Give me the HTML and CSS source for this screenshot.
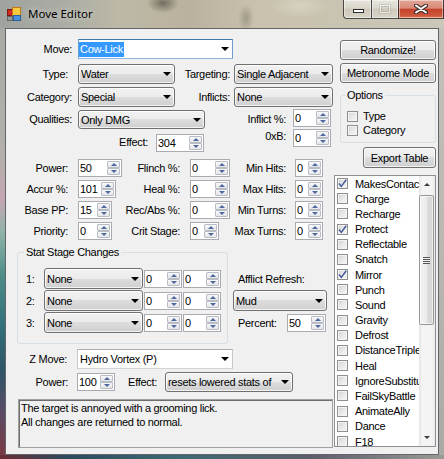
FILE: index.html
```html
<!DOCTYPE html>
<html>
<head>
<meta charset="utf-8">
<title>Move Editor</title>
<link rel="stylesheet" href="styles.css">
</head>
<body>
<div class="window">
  <div class="titlebar">
    <svg class="appicon" viewBox="0 0 14 14" width="14" height="14">
      <rect x="0.5" y="2.5" width="5" height="6" fill="#d02a1e" stroke="#7a1a12" stroke-width="1"/>
      <rect x="5.5" y="0.5" width="8" height="8" fill="#f6c93e" stroke="#c27a12" stroke-width="1"/>
      <rect x="0.5" y="9.5" width="5" height="4" fill="#9a9a9a" stroke="#666" stroke-width="1"/>
      <rect x="6.5" y="8.5" width="7" height="5" fill="#4a90dc" stroke="#2d5f9e" stroke-width="1"/>
    </svg>
    <span class="title">Move Editor</span>
    <div class="caption">
      <div class="cbtn min"><span class="g-min"></span></div>
      <div class="cbtn max"><span class="g-max"></span></div>
      <div class="cbtn close">
        <svg width="14" height="10" viewBox="0 0 14 10">
          <path d="M2 1.5 L12 8.5 M12 1.5 L2 8.5" stroke="#3a2a2a" stroke-width="4" stroke-linecap="round"/>
          <path d="M2 1.5 L12 8.5 M12 1.5 L2 8.5" stroke="#ffffff" stroke-width="2" stroke-linecap="round"/>
        </svg>
      </div>
    </div>
  </div>

  <div class="mid">
    <div class="frame-left"></div>
    <div class="client">
      <div class="left">
        <div class="row r-move">
          <div class="lbl w72 pr6">Move:</div>
          <div class="combo edit focus c155"><span class="txt"><span class="sel">Cow-Lick</span></span></div>
        </div>
        <div class="row r-type">
          <div class="lbl w72 pr10">Type:</div>
          <div class="combo c97"><span class="txt">Water</span></div>
          <div class="lbl w59 pr4">Targeting:</div>
          <div class="combo c99"><span class="txt">Single Adjacent</span></div>
        </div>
        <div class="row r-cat">
          <div class="lbl w72 pr6">Category:</div>
          <div class="combo c97"><span class="txt">Special</span></div>
          <div class="lbl w59 pr4">Inflicts:</div>
          <div class="combo c99"><span class="txt">None</span></div>
        </div>
        <div class="row r-qual">
          <div class="lbl w72 pr6">Qualities:</div>
          <div class="combo c127 h19 at-end"><span class="txt">Only DMG</span></div>
          <div class="lbl w88 pr7">Inflict %:</div>
          <div class="num n38 h19 at-start"><span class="val">0</span><span class="spin"><span class="up"></span><span class="dn"></span></span></div>
        </div>
        <div class="row r-eff">
          <div class="lbl w150 pr8 at-end lh19">Effect:</div>
          <div class="num n48 h19 at-end"><span class="val">304</span><span class="spin"><span class="up"></span><span class="dn"></span></span></div>
          <div class="lbl w89 pr7 at-start lh15">0xB:</div>
          <div class="num n38 h19 at-start"><span class="val">0</span><span class="spin"><span class="up"></span><span class="dn"></span></span></div>
        </div>
        <div class="row r-stat first">
          <div class="lbl w72 pr10">Power:</div>
          <div class="num n44"><span class="val">50</span><span class="spin"><span class="up"></span><span class="dn"></span></span></div>
          <div class="lbl w68 pr10">Flinch %:</div>
          <div class="num n40"><span class="val">0</span><span class="spin"><span class="up"></span><span class="dn"></span></span></div>
          <div class="lbl w65 pr9">Min Hits:</div>
          <div class="num n28"><span class="val">0</span><span class="spin"><span class="up"></span><span class="dn"></span></span></div>
        </div>
        <div class="row r-stat">
          <div class="lbl w72 pr10">Accur %:</div>
          <div class="num n38"><span class="val">101</span><span class="spin"><span class="up"></span><span class="dn"></span></span></div>
          <div class="lbl w74 pr10">Heal %:</div>
          <div class="num n40"><span class="val">0</span><span class="spin"><span class="up"></span><span class="dn"></span></span></div>
          <div class="lbl w65 pr9">Max Hits:</div>
          <div class="num n28"><span class="val">0</span><span class="spin"><span class="up"></span><span class="dn"></span></span></div>
        </div>
        <div class="row r-stat">
          <div class="lbl w72 pr10">Base PP:</div>
          <div class="num n34"><span class="val">15</span><span class="spin"><span class="up"></span><span class="dn"></span></span></div>
          <div class="lbl w78 pr10">Rec/Abs %:</div>
          <div class="num n40"><span class="val">0</span><span class="spin"><span class="up"></span><span class="dn"></span></span></div>
          <div class="lbl w65 pr9">Min Turns:</div>
          <div class="num n28"><span class="val">0</span><span class="spin"><span class="up"></span><span class="dn"></span></span></div>
        </div>
        <div class="row r-stat">
          <div class="lbl w72 pr10">Priority:</div>
          <div class="num n34"><span class="val">0</span><span class="spin"><span class="up"></span><span class="dn"></span></span></div>
          <div class="lbl w78 pr10">Crit Stage:</div>
          <div class="num n29"><span class="val">0</span><span class="spin"><span class="up"></span><span class="dn"></span></span></div>
          <div class="lbl w76 pr9">Max Turns:</div>
          <div class="num n28"><span class="val">0</span><span class="spin"><span class="up"></span><span class="dn"></span></span></div>
        </div>

        <div class="stat-area">
          <fieldset class="group stat-group">
            <legend>Stat Stage Changes</legend>
            <div class="srow">
              <div class="slbl">1:</div>
              <div class="combo c99 h21"><span class="txt">None</span></div>
              <div class="num n38 h19"><span class="val">0</span><span class="spin"><span class="up"></span><span class="dn"></span></span></div>
              <div class="num n38 h19"><span class="val">0</span><span class="spin"><span class="up"></span><span class="dn"></span></span></div>
            </div>
            <div class="srow">
              <div class="slbl">2:</div>
              <div class="combo c99 h21"><span class="txt">None</span></div>
              <div class="num n38 h19"><span class="val">0</span><span class="spin"><span class="up"></span><span class="dn"></span></span></div>
              <div class="num n38 h19"><span class="val">0</span><span class="spin"><span class="up"></span><span class="dn"></span></span></div>
            </div>
            <div class="srow">
              <div class="slbl">3:</div>
              <div class="combo c99 h21"><span class="txt">None</span></div>
              <div class="num n38 h19"><span class="val">0</span><span class="spin"><span class="up"></span><span class="dn"></span></span></div>
              <div class="num n38 h19"><span class="val">0</span><span class="spin"><span class="up"></span><span class="dn"></span></span></div>
            </div>
          </fieldset>
          <div class="afflict">
            <div class="af-lbl">Afflict Refresh:</div>
            <div class="combo c94 h21"><span class="txt">Mud</span></div>
            <div class="af-row">
              <div class="af-pct">Percent:</div>
              <div class="num n39 h19"><span class="val">50</span><span class="spin"><span class="up"></span><span class="dn"></span></span></div>
            </div>
          </div>
        </div>

        <div class="row r-zmove">
          <div class="lbl w71 pr10">Z Move:</div>
          <div class="combo edit c156"><span class="txt zt">Hydro Vortex (P)</span></div>
        </div>
        <div class="row r-zpow">
          <div class="lbl w71 pr9">Power:</div>
          <div class="num n38 h20"><span class="val">100</span><span class="spin"><span class="up"></span><span class="dn"></span></span></div>
          <div class="lbl w50 pr8">Effect:</div>
          <div class="combo c128"><span class="txt">resets lowered stats of</span></div>
        </div>
        <div class="desc">The target is annoyed with a grooming lick.<br>All changes are returned to normal.</div>
      </div>

      <div class="right">
        <div class="btn b-rand">Randomize!</div>
        <div class="btn b-metro">Metronome Mode</div>
        <fieldset class="group opt-group">
          <legend>Options</legend>
          <div class="opt first"><span class="cb"></span>Type</div>
          <div class="opt"><span class="cb"></span>Category</div>
        </fieldset>
        <div class="btn b-export">Export Table</div>
        <div class="clist">
          <div class="items">
            <div class="item"><span class="cb"><svg viewBox="0 0 9 9" width="9" height="9"><path d="M1 4.6 L3.3 7.4 L8.2 0.8" fill="none" stroke="#44589a" stroke-width="1.5"/></svg></span>MakesContact</div>
            <div class="item"><span class="cb"></span>Charge</div>
            <div class="item"><span class="cb"></span>Recharge</div>
            <div class="item"><span class="cb"><svg viewBox="0 0 9 9" width="9" height="9"><path d="M1 4.6 L3.3 7.4 L8.2 0.8" fill="none" stroke="#44589a" stroke-width="1.5"/></svg></span>Protect</div>
            <div class="item"><span class="cb"></span>Reflectable</div>
            <div class="item"><span class="cb"></span>Snatch</div>
            <div class="item"><span class="cb"><svg viewBox="0 0 9 9" width="9" height="9"><path d="M1 4.6 L3.3 7.4 L8.2 0.8" fill="none" stroke="#44589a" stroke-width="1.5"/></svg></span>Mirror</div>
            <div class="item"><span class="cb"></span>Punch</div>
            <div class="item"><span class="cb"></span>Sound</div>
            <div class="item"><span class="cb"></span>Gravity</div>
            <div class="item"><span class="cb"></span>Defrost</div>
            <div class="item"><span class="cb"></span>DistanceTriple</div>
            <div class="item"><span class="cb"></span>Heal</div>
            <div class="item"><span class="cb"></span>IgnoreSubstitute</div>
            <div class="item"><span class="cb"></span>FailSkyBattle</div>
            <div class="item"><span class="cb"></span>AnimateAlly</div>
            <div class="item"><span class="cb"></span>Dance</div>
            <div class="item"><span class="cb"></span>F18</div>
          </div>
          <div class="vscroll">
            <div class="sarrow s-up"></div>
            <div class="track"><div class="thumb"><span class="grip"></span></div></div>
            <div class="sarrow s-dn"></div>
          </div>
        </div>
      </div>
    </div>
    <div class="frame-right"></div>
  </div>
  <div class="frame-bottom"></div>
</div>
</body>
</html>
```

FILE: styles.css
```css
* { box-sizing: border-box; }
html, body { margin: 0; padding: 0; }
body {
  width: 444px; height: 459px; overflow: hidden;
  font-family: "Liberation Sans", Arial, sans-serif;
  font-size: 11px; letter-spacing: -0.3px; color: #000;
  background: #b4b2aa;
}
.window { width: 444px; height: 459px; display: flex; flex-direction: column; }

/* ---------- title bar ---------- */
.titlebar {
  height: 28px; flex: none; display: flex; align-items: flex-start;
  background:
    radial-gradient(ellipse 16px 10px at 163px 3px, rgba(55,50,40,0.55), rgba(55,50,40,0) 100%),
    radial-gradient(ellipse 8px 14px at 246px 18px, rgba(90,85,70,0.35), rgba(90,85,70,0) 100%),
    radial-gradient(ellipse 30px 12px at 300px 6px, rgba(230,225,210,0.5), rgba(230,225,210,0) 100%),
    linear-gradient(90deg, #9fa39e 0px, #aaaca4 60px, #bdb8a6 120px, #b9b29e 190px, #c8c2ae 260px, #c9c3b1 340px, #cbc7b9 444px);
}
.appicon { margin: 7px 0 0 7px; flex: none; }
.title {
  font-family: "Noto Sans", "DejaVu Sans", sans-serif; font-size: 11.5px; letter-spacing: 0;
  line-height: 16px; margin: 6px 0 0 7px;
  text-shadow: 0 0 6px rgba(255,255,255,0.7);
}
.caption { margin-left: auto; display: flex; height: 19px; }
.cbtn {
  height: 19px; display: flex; align-items: center; justify-content: center;
  border: 1px solid rgba(35,35,35,0.8); border-top: none;
  box-shadow: inset 0 0 0 1px rgba(255,255,255,0.45);
  background: linear-gradient(rgba(255,255,255,0.55) 0%, rgba(255,255,255,0.32) 45%, rgba(255,255,255,0.08) 50%, rgba(255,255,255,0.28) 100%);
}
.cbtn.min { width: 28px; border-right: none; border-bottom-left-radius: 4px; }
.cbtn.max { width: 27px; border-right: none; }
.cbtn.close {
  width: 46px;
  background: linear-gradient(#e2a798 0%, #d98a77 45%, #c5442d 52%, #cd553a 85%, #de7a55 100%);
}
.g-min { width: 11px; height: 4px; background: #fff; border: 1px solid #2c2c2c; margin: 4px 0 0 2px; }
.g-max { width: 10px; height: 8px; margin: -1px 0 0 0; border: 1px solid rgba(255,255,255,0.6); box-shadow: inset 0 0 0 1px rgba(90,90,90,0.25), 0 0 0 1px rgba(90,90,90,0.15); }

/* ---------- frame ---------- */
.mid { display: flex; height: 427px; flex: none; }
.frame-left {
  width: 5px; flex: none;
  background: linear-gradient(180deg, #a8aaa5 0%, #b3b0aa 30%, #c4a7b3 40%, #8fb3a8 48%, #4f8c88 58%, #33707a 70%, #2e5566 80%, #5a4b66 90%, #7a3a44 100%);
}
.frame-right { flex: 1; background: linear-gradient(180deg, #c3c1b8 0%, #b9b8b1 50%, #a9aaa6 100%); }
.frame-bottom {
  flex: 1;
  background: linear-gradient(90deg, #6b2d36 0%, #2b4a5c 15%, #3d6a75 40%, #5b5e6a 70%, #9a9a96 100%);
}
.client {
  width: 434px; flex: none; display: flex;
  border: 1px solid #62656a; background: #f0f0f0;
}

/* ---------- columns ---------- */
.left { width: 328px; flex: none; display: flex; flex-direction: column; }
.right { width: 102px; flex: none; display: flex; flex-direction: column; align-items: flex-start; }

.row { display: flex; align-items: center; flex: none; }
.r-move { height: 20px; margin-top: 10px; }
.r-type { height: 20px; margin-top: 5px; }
.r-cat { height: 20px; margin-top: 3px; }
.r-qual { height: 20px; margin-top: 2px; }
.r-eff { height: 23px; margin-top: 0; }
.r-stat { height: 18px; margin-top: 3px; }
.r-stat.first { margin-top: 7px; }
.r-zmove { height: 20px; margin-top: 5px; }
.r-zpow { height: 20px; margin-top: 3px; }

.at-end { align-self: flex-end; }
.at-start { align-self: flex-start; }
.lh19 { line-height: 19px; }
.lh15 { line-height: 15px; }

.lbl { flex: none; text-align: right; white-space: nowrap; }
.w50 { width: 50px; } .w59 { width: 59px; } .w65 { width: 65px; } .w68 { width: 68px; }
.w71 { width: 71px; } .w72 { width: 72px; } .w74 { width: 74px; } .w76 { width: 76px; }
.w78 { width: 78px; } .w88 { width: 88px; } .w89 { width: 89px; } .w150 { width: 150px; }
.pr4 { padding-right: 4px; } .pr6 { padding-right: 6px; } .pr7 { padding-right: 7px; }
.pr8 { padding-right: 8px; } .pr9 { padding-right: 9px; } .pr10 { padding-right: 10px; }

/* ---------- combo boxes ---------- */
.combo {
  flex: none; display: flex; align-items: center; height: 20px;
  border: 1px solid #707070; border-radius: 3px; padding-left: 2px;
  background: linear-gradient(#f2f2f2 0%, #ebebeb 50%, #dddddd 50%, #cfcfcf 100%);
  box-shadow: inset 0 0 0 1px rgba(255,255,255,0.75);
  white-space: nowrap; overflow: hidden;
}
.combo .txt { flex: 1; min-width: 0; overflow: hidden; }
.combo::after {
  content: ""; flex: none; margin-right: 3px;
  border-left: 4px solid transparent; border-right: 4px solid transparent; border-top: 4px solid #000;
}
.combo.edit {
  background: #fff; border-radius: 0; box-shadow: none; padding-left: 0;
  border-color: #abadb3 #c6c9cf #d0d4da #c6c9cf;
}
.combo.edit .zt { padding-left: 2px; }
.combo.focus { border-color: #3d7bad #6f9fcf #8fb6dc #6f9fcf; }
.sel { background: #3399ff; color: #fff; line-height: 15px; padding: 0 1px; display: inline-block; }
.c94 { width: 94px; } .c97 { width: 97px; } .c99 { width: 99px; } .c127 { width: 127px; }
.c128 { width: 128px; } .c155 { width: 155px; } .c156 { width: 156px; }
.h19 { height: 19px; } .h20 { height: 20px; } .h21 { height: 21px; }

/* ---------- numeric up/down ---------- */
.num {
  flex: none; display: flex; height: 18px;
  border: 1px solid #a9abb0; background: #fff;
}
.num .val { flex: 1; min-width: 0; padding-left: 1px; display: flex; align-items: center; overflow: hidden; }
.spin { width: 13px; flex: none; margin: 1px 1px 1px 0; display: flex; flex-direction: column; }
.spin > span {
  flex: 1; display: flex; align-items: center; justify-content: center;
  border: 1px solid #b7bcc5; border-radius: 1px;
  background: linear-gradient(#f8f8f8, #e4e5e8);
}
.spin .up::after { content: ""; border-left: 3px solid transparent; border-right: 3px solid transparent; border-bottom: 3px solid #4d67a0; }
.spin .dn::after { content: ""; border-left: 3px solid transparent; border-right: 3px solid transparent; border-top: 3px solid #4d67a0; }
.n28 { width: 28px; } .n29 { width: 29px; } .n34 { width: 34px; } .n38 { width: 38px; }
.n39 { width: 39px; } .n40 { width: 40px; } .n44 { width: 44px; } .n48 { width: 48px; }

/* ---------- group boxes ---------- */
.group {
  margin: 0; padding: 0; min-width: 0;
  border: 1px solid #d5dfe5; border-radius: 3px;
}
.group legend { padding: 0 2px; line-height: 13px; }

.stat-area { display: flex; flex: none; height: 98px; margin-top: 6px; }
.stat-group { width: 211px; margin-left: 11px; padding-bottom: 10px; }
.stat-group legend { margin-left: 6px; }
.srow { display: flex; align-items: center; height: 21px; margin-top: 1px; }
.srow:first-of-type { margin-top: 9px; }
.slbl { width: 26px; padding-left: 8px; flex: none; }
.srow .num { margin-left: 1px; }

.afflict { width: 94px; margin-left: 5px; display: flex; flex-direction: column; }
.af-lbl { line-height: 13px; margin-top: 27px; padding-left: 5px; white-space: nowrap; }
.afflict .combo { margin-top: 4px; }
.af-row { display: flex; align-items: center; height: 19px; margin-top: 2px; }
.af-pct { width: 54px; padding-left: 5px; flex: none; }

.desc {
  flex: none; width: 315px; height: 49px; margin: 7px 0 0 12px;
  border: 1px solid #a0a0a0; box-shadow: inset 1px 1px 0 #6e6e6e;
  padding: 1px 0 0 2px; line-height: 14px; background: #f0f0f0;
}

/* ---------- right column ---------- */
.btn {
  flex: none; display: flex; align-items: center; justify-content: center;
  border: 1px solid #707070; border-radius: 3px; white-space: nowrap;
  background: linear-gradient(#f2f2f2 0%, #ebebeb 50%, #dddddd 50%, #cfcfcf 100%);
  box-shadow: inset 0 0 0 1px rgba(255,255,255,0.75);
}
.b-rand { width: 96px; height: 20px; margin: 11px 0 0 6px; }
.b-metro { width: 96px; height: 20px; margin: 3px 0 0 6px; }
.b-export { width: 73px; height: 21px; margin: 4px 0 0 29px; }

.opt-group { width: 96px; margin: 6px 0 0 6px; padding-bottom: 5px; }
.opt-group legend { margin-left: 4px; }
.opt { display: flex; align-items: center; height: 14px; padding-left: 6px; }
.opt.first { margin-top: 7px; }
.opt .cb { margin-right: 5px; }

.cb {
  width: 11px; height: 11px; flex: none; display: flex; align-items: center; justify-content: center;
  border: 1px solid #8e8f8f;
  background: linear-gradient(135deg, #cfcfcf 0%, #e6e6e6 45%, #f7f7f7 100%);
  box-shadow: inset 0 0 0 1px #f3f3f3;
}

.clist {
  width: 102px; height: 272px; margin-top: 7px; flex: none;
  border: 1px solid #8c9096; background: #fff; display: flex;
}
.items { flex: 1; min-width: 0; overflow: hidden; }
.item { height: 15.18px; display: flex; align-items: center; white-space: nowrap; padding-left: 2px; }
.item .cb { margin-right: 7px; }

.vscroll {
  width: 16px; flex: none; display: flex; flex-direction: column;
  background: linear-gradient(90deg, #e4e4e4 0%, #f4f4f4 20%, #f4f4f4 80%, #eaeaea 100%);
}
.sarrow { height: 17px; flex: none; display: flex; align-items: center; justify-content: center; }
.s-up::after { content: ""; border-left: 3px solid transparent; border-right: 3px solid transparent; border-bottom: 3px solid #3c3c3c; }
.s-dn::after { content: ""; border-left: 3px solid transparent; border-right: 3px solid transparent; border-top: 3px solid #3c3c3c; }
.track { flex: 1; }
.thumb {
  height: 130px; margin: 2px 1px 0 0;
  border: 1px solid #979797; border-radius: 2px;
  background: linear-gradient(90deg, #f4f4f4 0%, #ebebeb 50%, #dcdcdc 51%, #d4d4d4 100%);
  box-shadow: inset 0 0 0 1px rgba(255,255,255,0.6);
  display: flex; align-items: center; justify-content: center;
}
.grip {
  width: 7px; height: 7px;
  background: repeating-linear-gradient(180deg, #555 0px, #555 1px, #f2f2f2 1px, #f2f2f2 2px);
}
```
